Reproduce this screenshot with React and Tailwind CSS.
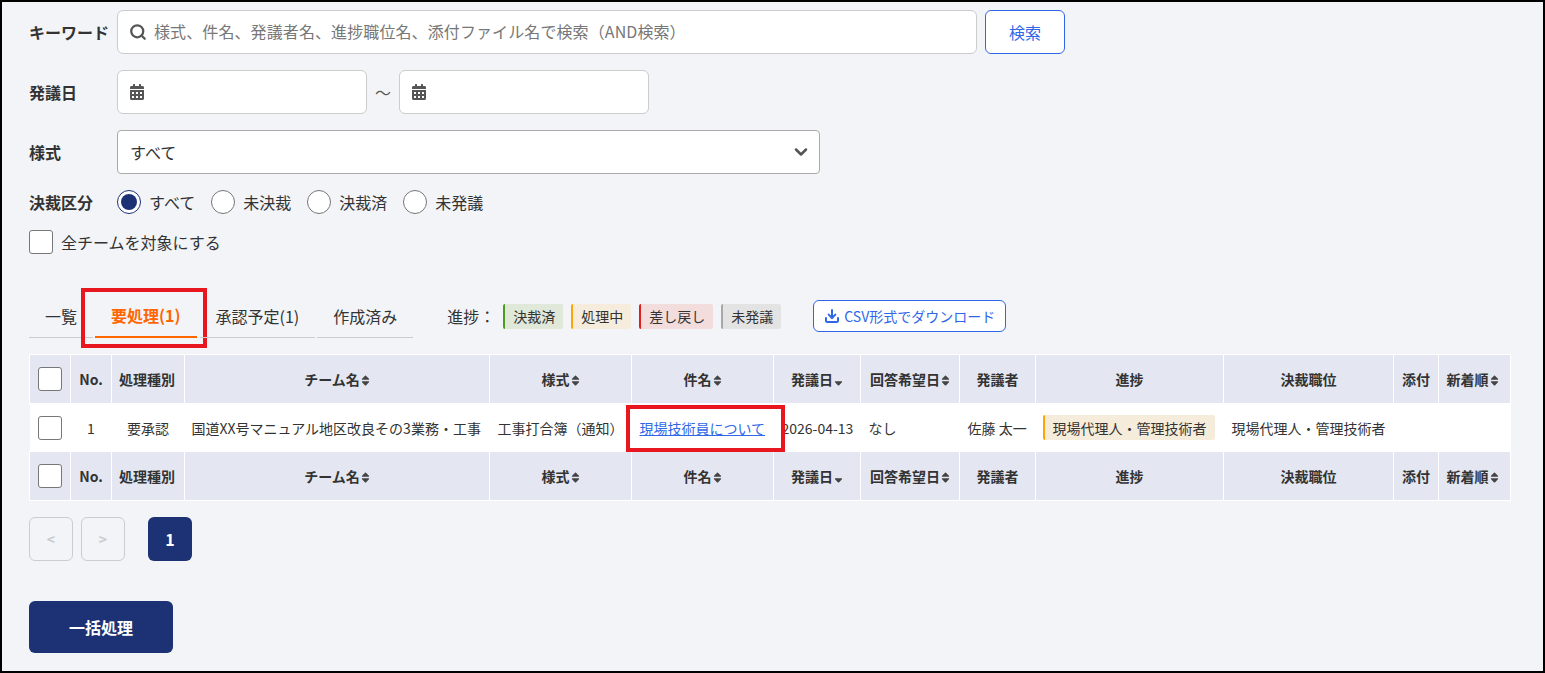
import React from "react";
import { Search, Download, ChevronDown } from "lucide-react";
import { FaSort, FaSortDown, FaCalendarAlt } from "react-icons/fa";

const font = { fontFamily: '"Noto Sans CJK JP", "Noto Sans", sans-serif' };

function Sort({ down }) {
  return down ? <FaSortDown className="inline-block w-[9px] h-[13px] ml-px text-[#444] align-[-2px]" /> : <FaSort className="inline-block w-[9px] h-[13px] ml-px text-[#444] align-[-2px]" />;
}

function Box({ className = "" }) {
  return <span className={"block w-6 h-6 bg-white border border-[#777] rounded-[3px] mx-auto " + className} />;
}

function Radio({ label, checked }) {
  return (
    <label className="flex items-center mr-4">
      <span className={"w-6 h-6 rounded-full bg-white border flex items-center justify-center " + (checked ? "border-[#1d3274]" : "border-[#777]")}>
        {checked && <span className="w-4 h-4 rounded-full bg-[#1d3274]" />}
      </span>
      <span className="ml-2 text-[#333]">{label}</span>
    </label>
  );
}

function Chip({ color, bg, children, className = "" }) {
  return (
    <span className={"inline-flex items-center h-[25px] pl-2 pr-2 border-l-2 rounded-[2px] text-sm text-[#333] " + className} style={{ borderLeftColor: color, backgroundColor: bg }}>
      {children}
    </span>
  );
}

function HeadRow() {
  const th = "border border-white bg-[#e4e7f1] h-[49px] text-sm font-bold text-[#333] text-center p-0 whitespace-nowrap";
  return (
    <tr>
      <th className={th}><Box /></th>
      <th className={th}>No.</th>
      <th className={th + " pr-[2px]"}>処理種別</th>
      <th className={th}>チーム名<Sort /></th>
      <th className={th}>様式<Sort /></th>
      <th className={th}>件名<Sort /></th>
      <th className={th}>発議日<Sort down /></th>
      <th className={th}>回答希望日<Sort /></th>
      <th className={th}>発議者</th>
      <th className={th}>進捗</th>
      <th className={th}>決裁職位</th>
      <th className={th}>添付</th>
      <th className={th + " pr-[4px]"}>新着順<Sort /></th>
    </tr>
  );
}

function Tab({ children, active, className = "" }) {
  return (
    <div className={"relative h-[38px] flex items-center px-4 pb-[6px] border-b " + (active ? "border-b-2 border-[#ff6600] text-[#ff6600] font-bold" : "border-[#ccc] text-[#333]") + " " + className}>
      {children}
    </div>
  );
}

export default function App() {
  const td = "bg-white h-12 text-sm text-[#333] p-0 whitespace-nowrap";
  const cols = [41, 41, 73, 305, 142, 142, 87, 99, 76, 188, 170, 45, 72];
  return (
    <div style={font} className="box-border w-[1545px] h-[673px] border-2 border-black bg-[#f2f4f8] pl-[27px] pt-2 text-base text-[#333] overflow-hidden">
      <div className="flex items-center h-11 mb-4">
        <span className="w-[88px] font-bold">キーワード</span>
        <div className="w-[860px] h-11 bg-white border border-[#ccc] rounded-md flex items-center px-[11px]">
          <Search className="w-[18px] h-[18px] text-[#555] shrink-0" strokeWidth={3} />
          <span className="ml-[7px] text-[#777] -mt-[2px] tracking-[0.1px]">様式、件名、発議者名、進捗職位名、添付ファイル名で検索（AND検索）</span>
        </div>
        <button className="ml-2 w-20 h-11 border border-[#2f67e8] rounded-md bg-white text-[#2f67e8] text-base">検索</button>
      </div>
      <div className="flex items-center h-11 mb-4">
        <span className="w-[88px] font-bold">発議日</span>
        <div className="w-[250px] h-11 bg-white border border-[#ccc] rounded-md flex items-center px-3">
          <FaCalendarAlt className="w-[14px] h-4 text-[#555]" />
        </div>
        <span className="w-8 text-center text-[#555]">～</span>
        <div className="w-[250px] h-11 bg-white border border-[#ccc] rounded-md flex items-center px-3">
          <FaCalendarAlt className="w-[14px] h-4 text-[#555]" />
        </div>
      </div>
      <div className="flex items-center h-11 mb-4">
        <span className="w-[88px] font-bold">様式</span>
        <div className="w-[703px] h-11 bg-white border border-[#aaa] rounded-[4px] flex items-center justify-between pl-3 pr-2">
          <span>すべて</span>
          <ChevronDown className="w-[20px] h-[20px] text-[#555]" strokeWidth={3} />
        </div>
      </div>
      <div className="flex items-center h-6 mb-4">
        <span className="w-[88px] font-bold">決裁区分</span>
        <Radio label="すべて" checked />
        <Radio label="未決裁" />
        <Radio label="決裁済" />
        <Radio label="未発議" />
      </div>
      <div className="flex items-center h-6">
        <span className="w-6 h-6 bg-white border border-[#777] rounded-[3px]" />
        <span className="ml-2">全チームを対象にする</span>
      </div>

      <div className="flex items-end h-[38px] mt-[46px]">
        <Tab>一覧</Tab>
        <Tab active className="ml-[2px] mr-[3px]">
          要処理(1)
          <span className="absolute -left-[14px] -top-3 w-[126px] h-[60px] border-4 border-[#e8171f]" />
        </Tab>
        <Tab className="mr-[2px]">承認予定(1)</Tab>
        <Tab>作成済み</Tab>
        <div className="self-start h-8 flex items-center ml-[34px]">
          <span className="mr-2">進捗：</span>
          <div className="flex gap-2">
            <Chip color="#4d9a1e" bg="#dfe8d9">決裁済</Chip>
            <Chip color="#ffa500" bg="#f6ecdb">処理中</Chip>
            <Chip color="#e01e1e" bg="#f3dcdc">差し戻し</Chip>
            <Chip color="#a8a8a8" bg="#e3e3e3">未発議</Chip>
          </div>
          <button className="ml-8 w-[193px] h-8 bg-white border border-[#2f67e8] rounded-md flex items-center justify-center text-[#2f67e8] text-sm">
            <Download className="w-4 h-4 mr-1" strokeWidth={3} />
            CSV形式でダウンロード
          </button>
        </div>
      </div>

      <table className="mt-4 w-[1481px] table-fixed border-collapse">
        <colgroup>
          {cols.map((w, i) => <col key={i} style={{ width: w }} />)}
        </colgroup>
        <thead><HeadRow /></thead>
        <tbody>
          <tr>
            <td className={td}><Box /></td>
            <td className={td + " text-center"}>1</td>
            <td className={td + " text-center"}>要承認</td>
            <td className={td + " pl-[7px]"}>国道XX号マニュアル地区改良その3業務・工事</td>
            <td className={td + " pl-2"}>工事打合簿（通知）</td>
            <td className={td + " pl-2 relative"}>
              <a className="text-[#2f67e8] underline">現場技術員について</a>
              <span className="absolute -left-[6px] top-px w-[159px] h-[47px] border-4 border-[#e8171f]" />
            </td>
            <td className={td + " pl-2"}>2026-04-13</td>
            <td className={td + " pl-2"}>なし</td>
            <td className={td + " pl-2"}>佐藤 太一</td>
            <td className={td + " pl-[7px]"}><Chip color="#ffa500" bg="#f6ecdb">現場代理人・管理技術者</Chip></td>
            <td className={td + " pl-2"}>現場代理人・管理技術者</td>
            <td className={td} />
            <td className={td} />
          </tr>
          <HeadRow />
        </tbody>
      </table>

      <div className="flex mt-4">
        <button className="w-11 h-11 border border-[#ccc] rounded-md text-[#ccc] text-sm font-bold">&lt;</button>
        <button className="ml-2 w-11 h-11 border border-[#ccc] rounded-md text-[#ccc] text-sm font-bold">&gt;</button>
        <button className="ml-[23px] w-11 h-11 rounded-md bg-[#1d3274] text-white font-bold">1</button>
      </div>
      <button className="block mt-10 w-36 h-[52px] rounded-md bg-[#1d3274] text-white font-bold">一括処理</button>
    </div>
  );
}
